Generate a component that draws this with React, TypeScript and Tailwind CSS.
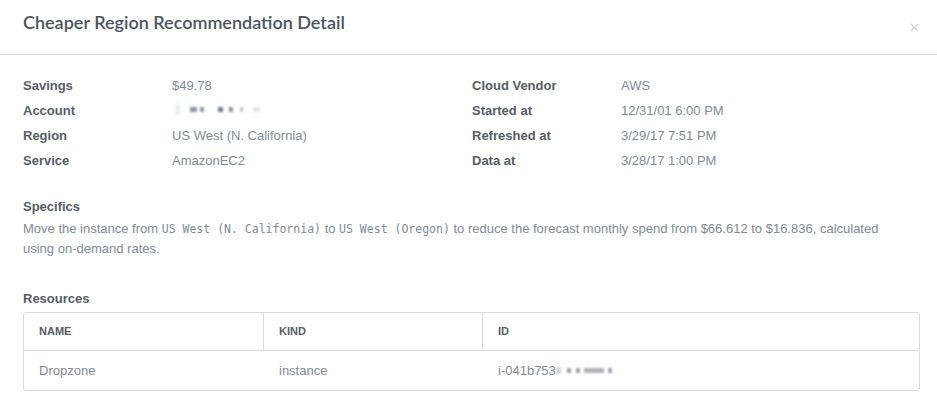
import { X } from "lucide-react";

const left = [
  ["Savings", "$49.78"],
  ["Account", null],
  ["Region", "US West (N. California)"],
  ["Service", "AmazonEC2"],
];

const right = [
  ["Cloud Vendor", "AWS"],
  ["Started at", "12/31/01 6:00 PM"],
  ["Refreshed at", "3/29/17 7:51 PM"],
  ["Data at", "3/28/17 1:00 PM"],
];

// blurred-out placeholder blocks: [width, gap before, colour]
const Blur = ({ parts }: { parts: [number, number, string][] }) => (
  <span className="inline-flex items-center blur-[1px] align-middle">
    {parts.map(([w, g, c], i) => (
      <span
        key={i}
        className="inline-block h-[5px]"
        style={{ width: w, marginLeft: g, background: c }}
      />
    ))}
  </span>
);

const Field = ({ label, value }: { label: string; value: string | null }) => (
  <div className="flex h-[25px] items-center">
    <div className="w-[149px] font-bold text-[#555d67]">{label}</div>
    <div className="text-[#7d8b99]">
      {value ?? (
        <span className="ml-[3px] inline-flex items-center">
          <span className="inline-block h-[11px] w-[5px] bg-[#eceef0] blur-[1px]" />
          <Blur
            parts={[
              [7, 10, "#8a96a3"],
              [4, 3, "#8a96a3"],
              [5, 14, "#6f7c89"],
              [4, 6, "#8a96a3"],
              [3, 7, "#c3c9cf"],
              [7, 10, "#e3e6e9"],
            ]}
          />
        </span>
      )}
    </div>
  </div>
);

export default function App() {
  return (
    <div className="h-[404px] w-[937px] overflow-hidden bg-white font-['Liberation_Sans',Arial,sans-serif] text-[13px]">
      {/* Header */}
      <div className="flex h-[55px] items-center justify-between border-b border-[#d9dcdf] pl-[23px] pr-[16px]">
        <h2 className="pb-[9px] font-['Lato',sans-serif] text-[18px] font-semibold text-[#4a5460]">
          Cheaper Region Recommendation Detail
        </h2>
        <X className="h-[13px] w-[13px] text-[#d3d6d9]" strokeWidth={2.5} />
      </div>

      {/* Body */}
      <div className="px-[23px] pt-[18px]">
        <div className="grid grid-cols-[449px_1fr]">
          <div>
            {left.map(([l, v]) => (
              <Field key={l} label={l as string} value={v} />
            ))}
          </div>
          <div>
            {right.map(([l, v]) => (
              <Field key={l} label={l as string} value={v} />
            ))}
          </div>
        </div>

        {/* Specifics */}
        <div className="mt-[24px]">
          <div className="font-bold text-[#555d67]">Specifics</div>
          <p className="mt-[2px] pr-[24px] leading-[20px] text-[#7d8b99]">
            Move the instance from{" "}
            <code className="font-['DejaVu_Sans_Mono',monospace] text-[11.5px]">
              US West (N. California)
            </code>{" "}
            to{" "}
            <code className="font-['DejaVu_Sans_Mono',monospace] text-[11.5px]">
              US West (Oregon)
            </code>{" "}
            to reduce the forecast monthly spend from $66.612 to $16.836,
            calculated using on-demand rates.
          </p>
        </div>

        {/* Resources */}
        <div className="mt-[30px]">
          <div className="font-bold text-[#555d67]">Resources</div>
          <div className="mt-[4px] w-[897px] overflow-hidden rounded-[3px] border border-[#d7dbdf]">
            <div className="grid h-[38px] grid-cols-[240px_219px_1fr] border-b border-[#d7dbdf] text-[11px] font-bold text-[#555d67]">
              <div className="flex items-center border-r border-[#d7dbdf] pl-[15px]">NAME</div>
              <div className="flex items-center border-r border-[#d7dbdf] pl-[15px]">KIND</div>
              <div className="flex items-center pl-[15px]">ID</div>
            </div>
            <div className="grid h-[39px] grid-cols-[240px_219px_1fr] text-[#7d8b99]">
              <div className="flex items-center pl-[15px]">Dropzone</div>
              <div className="flex items-center pl-[15px]">instance</div>
              <div className="flex items-center pl-[15px]">
                i-041b753
                <span className="inline-block h-[7px] w-[5px] bg-[#cfd4d9] blur-[1px]" />
                <Blur
                  parts={[
                    [4, 6, "#9aa4ae"],
                    [4, 5, "#9aa4ae"],
                    [20, 4, "#aab3bc"],
                    [4, 4, "#9aa4ae"],
                  ]}
                />
              </div>
            </div>
          </div>
        </div>
      </div>
    </div>
  );
}
